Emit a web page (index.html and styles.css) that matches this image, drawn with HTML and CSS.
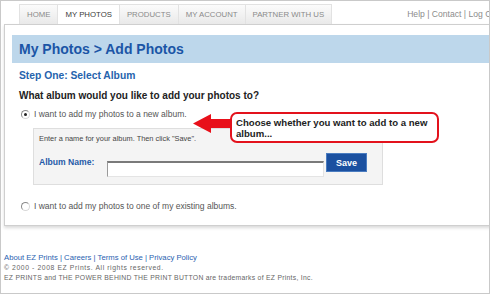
FILE: index.html
```html
<!DOCTYPE html>
<html lang="en">
<head>
    <meta charset="UTF-8">
    <title>My Photos - Add Photos</title>
    <link rel="stylesheet" href="styles.css">
</head>
<body>
    <div class="page">
        <div class="topbar">
            <ul class="tabs">
                <li class="tab">HOME</li>
                <li class="tab active">MY PHOTOS</li>
                <li class="tab">PRODUCTS</li>
                <li class="tab">MY ACCOUNT</li>
                <li class="tab">PARTNER WITH US</li>
            </ul>
            <div class="top-links">Help | Contact | Log Out</div>
        </div>

        <div class="card">
            <div class="title-bar">My Photos &gt; Add Photos</div>
            <div class="step">Step One: Select Album</div>
            <div class="question">What album would you like to add your photos to?</div>

            <label class="choice">
                <span class="radio checked"></span>
                I want to add my photos to a new album.
            </label>

            <div class="new-album">
                <div class="hint">Enter a name for your album. Then click "Save".</div>
                <div class="name-row">
                    <span class="name-label">Album Name:</span>
                    <input type="text" class="name-input">
                    <button class="save-btn">Save</button>
                </div>
            </div>

            <label class="choice existing">
                <span class="radio"></span>
                I want to add my photos to one of my existing albums.
            </label>
        </div>

        <div class="footer">
            <div class="footer-links">About EZ Prints | Careers | Terms of Use | Privacy Policy</div>
            <div class="copy wide">&copy; 2000 - 2008 EZ Prints. All rights reserved.</div>
            <div class="copy">EZ PRINTS and THE POWER BEHIND THE PRINT BUTTON are trademarks of EZ Prints, Inc.</div>
        </div>

        <!-- callout pointing at the first option -->
        <svg class="arrow" width="42" height="24" viewBox="0 0 42 24">
            <polygon points="1,11.5 19,2 19,7 41,7 41,16 19,16 19,21" fill="#e8101a"/>
        </svg>
        <div class="callout">Choose whether you want to add to a new album...</div>
    </div>
</body>
</html>
```

FILE: styles.css
```css
body {
    margin: 0;
    font-family: "Liberation Sans", Arial, sans-serif;
    background: #fff;
}

.page {
    position: relative;
    width: 490px;
    height: 294px;
    box-sizing: border-box;
    border: 1px solid #c9c9c9;
    overflow: hidden;
}

/* tabs + top links */
.topbar {
    display: flex;
    align-items: flex-end;
    padding: 3px 0 0 18px;
    height: 20px;
}
.tabs {
    display: flex;
    list-style: none;
    margin: 0;
    padding: 0;
    flex-shrink: 0;
}
.tab {
    height: 19px;
    line-height: 19px;
    padding: 0 7px;
    font-size: 7.8px;
    color: #8a8a8a;
    border: 1px solid #e2e2e2;
    border-bottom: none;
    border-left: none;
    background: linear-gradient(to bottom, #fbfbfb, #e9e9e9);
}
.tab:first-child {
    border-left: 1px solid #e2e2e2;
}
.tab.active {
    background: #fff;
    color: #3a3a3a;
}
.top-links {
    flex-shrink: 0;
    margin-left: 75px;
    align-self: center;
    margin-top: 0;
    white-space: nowrap;
    font-size: 8.6px;
    color: #8c8c8c;
}

/* main card */
.card {
    margin-left: 3px;
    width: 520px;
    border: 1px solid #cfcfcf;
    border-right: none;
    padding: 10px 0 13px 7px;
    box-shadow: 0 2px 3px rgba(0, 0, 0, 0.15);
}
.title-bar {
    height: 28px;
    line-height: 28px;
    padding-left: 7px;
    background: #bdd7eb;
    font-size: 14px;
    font-weight: bold;
    color: #1b55a6;
}
.step {
    margin: 7px 0 0 7px;
    font-size: 10.3px;
    line-height: 12px;
    font-weight: bold;
    color: #2663ad;
}
.question {
    margin: 8px 0 0 7px;
    font-size: 10px;
    line-height: 12px;
    font-weight: bold;
    color: #222;
}

.choice {
    display: flex;
    align-items: center;
    gap: 4px;
    margin: 7px 0 0 9px;
    font-size: 8.5px;
    line-height: 11px;
    color: #555;
}
.choice.existing {
    margin-top: 16px;
}
.radio {
    position: relative;
    width: 7px;
    height: 7px;
    border: 1px solid #8a8a8a;
    border-right-color: #d8d8d8;
    border-bottom-color: #d8d8d8;
    border-radius: 50%;
    background: #fff;
}
.radio.checked::after {
    content: "";
    position: absolute;
    left: 2px;
    top: 2px;
    width: 3px;
    height: 3px;
    border-radius: 50%;
    background: #222;
}

.new-album {
    margin: 8px 0 0 21px;
    width: 338px;
    height: 47px;
    padding: 5px 5px 3px;
    border: 1px solid #dedede;
    background: #f4f4f4;
}
.hint {
    font-size: 7.4px;
    line-height: 10px;
    color: #444;
}
.name-row {
    display: flex;
    align-items: flex-start;
    margin-top: 9px;
}
.name-label {
    width: 68px;
    line-height: 19px;
    font-size: 8.6px;
    font-weight: bold;
    color: #1f5aa8;
}
.name-input {
    margin: 8px 0 0 0;
    width: 217px;
    height: 16px;
    box-sizing: border-box;
    border: 1px solid #e4e4e4;
    border-top: 2px solid #7a7a7a;
    border-left: 1px solid #9a9a9a;
    background: #fff;
    padding: 0;
}
.save-btn {
    margin-left: 2px;
    width: 41px;
    height: 19px;
    padding: 0;
    border: 1px solid #4a7cc0;
    background: #1b50a0;
    color: #fff;
    font-family: "Liberation Sans", Arial, sans-serif;
    font-size: 9px;
    font-weight: bold;
}

/* footer */
.footer {
    margin-top: 27px;
    padding-left: 3px;
}
.footer-links {
    font-size: 7.7px;
    line-height: 10px;
    color: #2a62b0;
}
.copy {
    font-size: 6.8px;
    line-height: 10px;
    color: #666;
    letter-spacing: 0.28px;
}
.copy.wide {
    letter-spacing: 0.6px;
}

/* callout */
.arrow {
    position: absolute;
    left: 191px;
    top: 111px;
}
.callout {
    position: absolute;
    left: 229px;
    top: 111px;
    width: 201px;
    height: 27px;
    padding: 0 0 0 4px;
    border: 2px solid #e3121c;
    border-radius: 7px;
    background: #fff;
    font-size: 9.6px;
    line-height: 11px;
    font-weight: bold;
    color: #222;
    display: flex;
    align-items: center;
}
```
